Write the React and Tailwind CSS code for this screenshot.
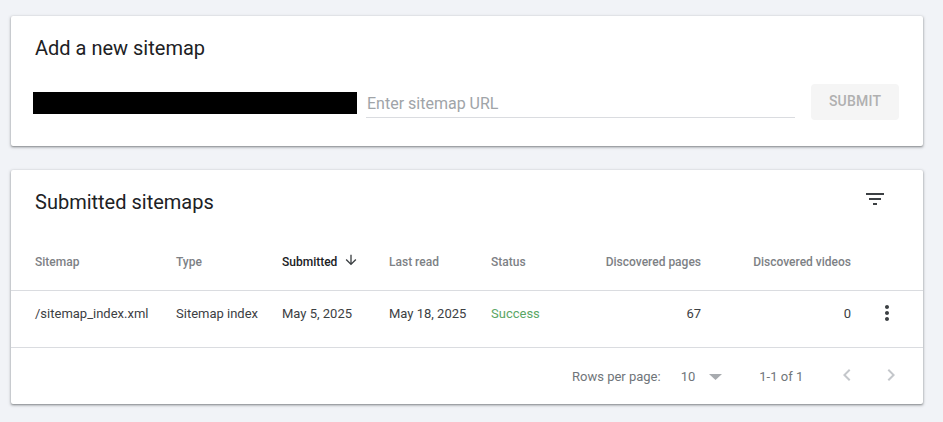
const gridCols = 'grid grid-cols-[141px_106px_107px_102px_80px_130px_150px_1fr] items-center pl-6';

function Card({ className, children }) {
  return (
    <div className={`rounded-[2px] bg-white shadow-[0_1px_2px_rgba(60,64,67,0.5),0_1px_3px_1px_rgba(60,64,67,0.15)] ${className}`}>
      {children}
    </div>
  );
}

export default function App() {
  return (
    <div className="h-[422px] overflow-hidden bg-[#f1f3f7] pl-[11px] pr-5 pt-4 font-['Roboto',sans-serif]">
      <Card className="h-[130px] px-6 pt-5">
        <h2 className="text-[20px] leading-6 text-[#202124]">Add a new sitemap</h2>
        <div className="mt-6 flex">
          <div className="-ml-0.5 mt-2 h-[22px] w-[324px] bg-black" />
          <div className="ml-[9px] mt-1 flex h-[30px] w-[429px] items-center border-b border-[#dadce0] pl-px pt-0.5 text-[16px] text-[#a0a4a8]">
            Enter sitemap URL
          </div>
          <button className="ml-4 h-9 w-[88px] rounded-[4px] bg-[#f5f5f5] pb-0.5 text-[14px] font-medium tracking-[0.2px] text-[#b0b0b0]">
            SUBMIT
          </button>
        </div>
      </Card>

      <Card className="mt-6 h-[234px]">
        <div className="flex h-[72px] items-start justify-between pl-6 pr-[36px] pt-5">
          <h2 className="text-[20px] leading-6 text-[#202124]">Submitted sitemaps</h2>
          <svg className="-mt-[3px]" width="24" height="24" viewBox="0 0 24 24" fill="#3c4043">
            <path d="M10 18h4v-2h-4v2zM3 6v2h18V6H3zm3 7h12v-2H6v2z" />
          </svg>
        </div>

        <div className={`${gridCols} h-[49px] border-b border-[#dadce0] pb-2 text-[12px] font-medium text-[#7d8185]`}>
          <div>Sitemap</div>
          <div>Type</div>
          <div className="flex items-center text-[#202124]">
            Submitted
            <svg className="ml-[6px] -mt-1" width="16" height="16" viewBox="0 0 24 24" fill="#3c4043">
              <path d="M20 12l-1.41-1.41L13 16.17V4h-2v12.17l-5.58-5.59L4 12l8 8 8-8z" />
            </svg>
          </div>
          <div>Last read</div>
          <div>Status</div>
          <div className="text-right">Discovered pages</div>
          <div className="text-right">Discovered videos</div>
        </div>

        <div className={`${gridCols} h-[57px] border-b border-[#dadce0] pb-[10px] text-[13px] text-[#3c4043]`}>
          <div>/sitemap_index.xml</div>
          <div>Sitemap index</div>
          <div>May 5, 2025</div>
          <div>May 18, 2025</div>
          <div className="text-[#5aa665]">Success</div>
          <div className="text-right">67</div>
          <div className="text-right">0</div>
          <div className="-mt-0.5 flex justify-end pr-6">
            <svg width="24" height="24" viewBox="0 0 24 24" fill="#3c4043">
              <path d="M12 8c1.1 0 2-.9 2-2s-.9-2-2-2-2 .9-2 2 .9 2 2 2zm0 2c-1.1 0-2 .9-2 2s.9 2 2 2 2-.9 2-2-.9-2-2-2zm0 6c-1.1 0-2 .9-2 2s.9 2 2 2 2-.9 2-2-.9-2-2-2z" />
            </svg>
          </div>
        </div>

        <div className="flex h-14 items-center pl-[561px] pt-[2px] text-[13px] text-[#70757a]">
          <span>Rows per page:</span>
          <span className="ml-5">10</span>
          <svg className="ml-[14px]" width="13" height="6" viewBox="0 0 13 6" fill="#a8abaf">
            <path d="M0 0h13L6.5 6z" />
          </svg>
          <span className="ml-[37px]">1-1 of 1</span>
          <svg className="ml-8 -mt-1" width="24" height="24" viewBox="0 0 24 24" fill="#c4c7cb">
            <path d="M15.41 7.41L14 6l-6 6 6 6 1.41-1.41L10.83 12z" />
          </svg>
          <svg className="ml-5 -mt-1" width="24" height="24" viewBox="0 0 24 24" fill="#c4c7cb">
            <path d="M10 6L8.59 7.41 13.17 12l-4.58 4.59L10 18l6-6z" />
          </svg>
        </div>
      </Card>
    </div>
  );
}
